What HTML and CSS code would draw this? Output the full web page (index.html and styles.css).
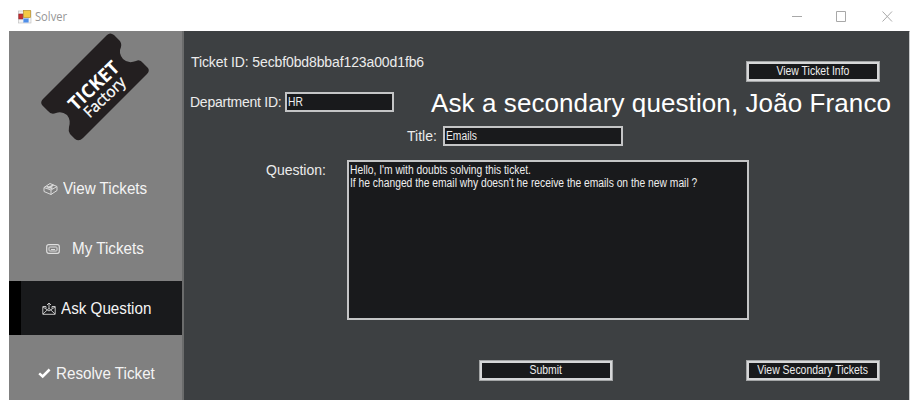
FILE: index.html
```html
<!DOCTYPE html>
<html lang="en">
<head>
<meta charset="utf-8">
<title>Solver</title>
<link rel="stylesheet" href="styles.css">
</head>
<body>
<div class="window">
  <header class="titlebar">
    <svg class="app-icon" width="14" height="14" viewBox="0 0 14 14">
      <rect x=".5" y="1" width="12.5" height="12" fill="#f4f4f4" stroke="#bbb" stroke-width=".6"/>
      <rect x="5.5" y=".5" width="7" height="7" fill="#f3c944" stroke="#b98f2a" stroke-width=".7"/>
      <rect x=".8" y="4" width="4" height="5" fill="#c9302f" stroke="#8e2430" stroke-width=".6"/>
      <rect x="5.5" y="8.7" width="5" height="3.6" fill="#4f8fe8" stroke="#7daaf0" stroke-width=".5"/>
    </svg>
    <span class="app-name">Solver</span>
    <svg class="controls" width="102" height="12" viewBox="0 0 102 12" fill="none" stroke="#a8a8a8" stroke-width="1">
      <path d="M1 5.500H11M45.500 .5H54.500V10.500H45.500ZM91.500 .5L101 10.500M101 .5L91.500 10.500"/>
    </svg>
  </header>
  <div class="body">
    <aside class="sidebar">
      <svg class="logo" width="174" height="119" viewBox="9 31 174 119">
        <path d="M107 35Q110 32 114 35L119 40Q122 43 121 47Q118 53 123 59Q128 64 136 61Q140 59 143 63L148 68Q150 71 147 74L83 138Q79 142 75 139L70 134Q68 131 69 127Q71 120 67 115Q62 111 56 113Q51 115 48 111L42 105Q40 102 43 99Z" fill="#231f20"/>
        <g transform="translate(94.500 86.500) rotate(-43.500)" fill="#fff" text-anchor="middle">
          <text class="logo-top" x="0" y="5.500" textLength="62" lengthAdjust="spacingAndGlyphs">TICKET</text>
          <text class="logo-sub" x="0" y="20" textLength="51" lengthAdjust="spacingAndGlyphs">Factory</text>
        </g>
      </svg>
      <nav class="nav">
        <a class="item view">
          <svg width="15" height="14" viewBox="0 0 15 14" fill="none" stroke="#dadada" stroke-width="1" stroke-linejoin="round"><path d="M1 5.500L7 1.500L14 4.500V8.500L8 12.500L1 9.500ZM1 5.500L8 8L14 4.500M8 8V12.500"/><path d="M3.500 4.500L9.500 6.500M5 6L10.500 3" stroke-width="1.500"/></svg>
          <span>View Tickets</span>
        </a>
        <a class="item mine">
          <svg width="14" height="10" viewBox="0 0 14 10" fill="none" stroke="#dedede"><rect x=".7" y=".7" width="12.600" height="8.600" rx="2" stroke-width="1.200"/><rect x="3" y="3" width="8" height="4" rx=".8"/><path d="M5 5.500H9"/></svg>
          <span>My Tickets</span>
        </a>
        <a class="item ask active">
          <svg width="14" height="13" viewBox="0 0 14 13" fill="none" stroke="#c4c4c4" stroke-width="1"><path d="M4 4.500H.8V12.300H13.200V4.500H10M1 5L7 9L13 5M1 12L5.200 8L7 6.500L8.800 8L13 12M4 6.500V4.500M10 6.500V4.500M7 7V1M5 3L7 1L9 3"/></svg>
          <span>Ask Question</span>
        </a>
        <a class="item resolve">
          <svg width="13" height="11" viewBox="0 0 13 11" fill="none" stroke="#fff" stroke-width="2.500"><path d="M1.200 5.300L4.700 8.500L11.600 1.500"/></svg>
          <span>Resolve Ticket</span>
        </a>
      </nav>
    </aside>
    <main class="main">
      <div class="row row-id">
        <span class="label ticket-id">Ticket ID: 5ecbf0bd8bbaf123a00d1fb6</span>
        <button class="btn"><span>View Ticket Info</span></button>
      </div>
      <div class="row row-dept">
        <label class="label dept">Department ID:</label>
        <div class="field small"><p>HR</p></div>
        <h1>Ask a secondary question, João Franco</h1>
      </div>
      <div class="row row-title">
        <label class="label">Title:</label>
        <div class="field medium"><p>Emails</p></div>
      </div>
      <div class="row row-question">
        <label class="label">Question:</label>
        <div class="field area"><p>Hello, I'm with doubts solving this ticket.</p><p>If he changed the email why doesn't he receive the emails on the new mail ?</p></div>
      </div>
      <div class="row row-actions">
        <button class="btn submit"><span>Submit</span></button>
        <button class="btn secondary"><span>View Secondary Tickets</span></button>
      </div>
    </main>
  </div>
</div>
</body>
</html>
```
FILE: styles.css
```css
* { box-sizing: border-box; }
body { margin: 0; background: #fff; font-family: "Liberation Sans", Arial, sans-serif; }
.window { width: 901px; height: 400px; margin-left: 9px; display: flex; flex-direction: column; }
.titlebar { height: 31px; display: flex; align-items: center; padding: 2px 17px 0 9px; }
.app-name { margin-left: 3px; font: 12px "Open Sans", sans-serif; color: #969696; transform: scaleX(.93); transform-origin: left; }
.controls { margin-left: auto; }
.body { flex: 1; display: flex; border-right: 1px solid #c7c9ca; border-top: 1px solid #777; }
.sidebar { width: 175px; background: #808080; border-right: 2px solid #6b6c6c; display: flex; flex-direction: column; margin-top: -1px; }
.logo { display: block; flex: none; }
.logo-top { font: bold 19px "Open Sans", sans-serif; }
.logo-sub { font: 500 15.5px "Open Sans", sans-serif; stroke: #fff; stroke-width: .3px; }
.nav { display: grid; grid-template-rows: 76px 55px 54px 65px; }
.item { display: flex; align-items: center; color: #f4f4f4; font-size: 16px; white-space: nowrap; }
.item span { transform: scaleX(.95); transform-origin: left; }
.view { padding: 2px 0 0 34px; gap: 5px; }
.mine { padding: 0 0 10px 37px; gap: 12px; }
.ask { padding: 1px 0 0 21px; gap: 5px; }
.resolve { padding: 12px 0 0 29px; gap: 5px; }
.active { background: #191a1c; border-left: 12px solid #000; }
.main { flex: 1; background: #3d4042; color: #ececec; margin-top: -1px; }
.row { display: flex; }
.label { font-size: 14px; line-height: 20px; white-space: nowrap; }
.row-id { height: 61px; padding: 21px 29px 0 7px; }
.ticket-id { letter-spacing: -.11px; }
.btn { margin: 9px 0 0 auto; width: 134px; height: 21px; padding: 0; border: 3px solid #d6d7d8; outline: 1px solid #a3a5a6; outline-offset: -1px; background: #191a1c; color: #eee; font: 12px/15px "Liberation Sans", Arial, sans-serif; white-space: nowrap; }
.btn span { display: inline-block; transform: scaleX(.87); margin: 0 -10px; }
.row-dept { height: 34px; padding-left: 6px; }
.dept { width: 95px; letter-spacing: -.25px; }
.field { border: 2px solid #c4c5c6; background: #191a1c; color: #eee; font-size: 12px; line-height: 13px; padding: 2px 0 0 1px; white-space: nowrap; }
.field p { margin: 0; transform: scaleX(.857); transform-origin: left; }
.small { width: 109px; height: 20px; }
h1 { margin: -5px 0 0 37px; font-size: 26px; line-height: 32px; font-weight: 400; color: #fff; white-space: nowrap; letter-spacing: .09px; }
.row-title { height: 34px; padding-left: 223px; gap: 6px; }
.medium { width: 180px; height: 20px; }
.row-question { height: 200px; padding-left: 82px; gap: 21px; }
.area { width: 402px; height: 160px; }
.row-actions { padding: 0 29px 0 295px; }
.row-actions .btn { margin-top: 0; }
.row-actions .submit { margin-left: 0; }
.row-actions .secondary { margin-left: auto; }
```
